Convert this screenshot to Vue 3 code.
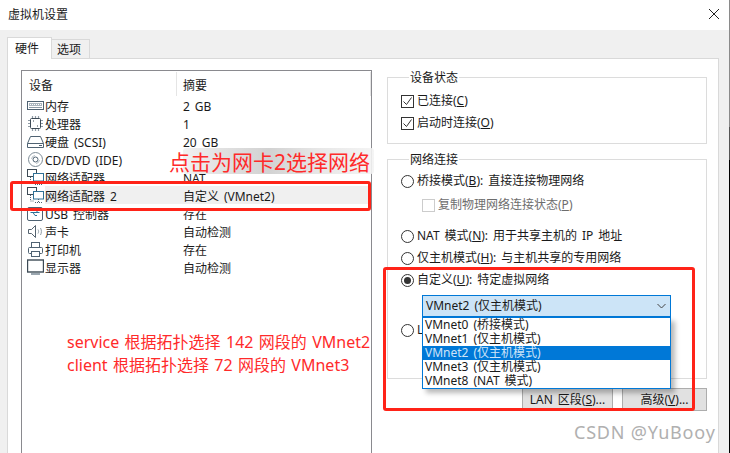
<script setup>
const rows = [
  { icon: 'mem', name: '内存', val: '2 GB' },
  { icon: 'cpu', name: '处理器', val: '1' },
  { icon: 'hdd', name: '硬盘 (SCSI)', val: '20 GB' },
  { icon: 'cd', name: 'CD/DVD (IDE)', val: '' },
  { icon: 'net', name: '网络适配器', val: 'NAT' },
  { icon: 'net', name: '网络适配器 2', val: '自定义 (VMnet2)', sel: true },
  { icon: 'usb', name: 'USB 控制器', val: '存在' },
  { icon: 'snd', name: '声卡', val: '自动检测' },
  { icon: 'prn', name: '打印机', val: '存在' },
  { icon: 'mon', name: '显示器', val: '自动检测' }
]
const nets = [
  { t: 'VMnet0 (桥接模式)' },
  { t: 'VMnet1 (仅主机模式)' },
  { t: 'VMnet2 (仅主机模式)', sel: true },
  { t: 'VMnet3 (仅主机模式)' },
  { t: 'VMnet8 (NAT 模式)' }
]
</script>

<template>
  <div class="win">
    <header class="title">
      <span>虚拟机设置</span>
      <svg class="close" width="12" height="12" viewBox="0 0 12 12"><path d="M1 1l10 10M11 1L1 11" stroke="#222" fill="none" /></svg>
    </header>
    <div class="body">
      <div class="tabs">
        <div class="tab on">硬件</div>
        <div class="tab">选项</div>
      </div>
      <div class="panel">
        <section class="list">
          <div class="lhead">
            <div class="c1">设备</div>
            <div class="c2">摘要</div>
          </div>
          <div v-for="r in rows" :key="r.name" class="row">
            <svg class="ico" width="17" height="17" viewBox="0 0 17 17" fill="none" stroke="#4f6272">
              <template v-if="r.icon === 'mem'"><rect x="0.5" y="4.500" width="16" height="8" /><rect x="2" y="6" width="13" height="3" fill="#a9b4bd" stroke="none" /><path d="M3 7.500h11" stroke="#fff" stroke-dasharray="1 1" /><path d="M2 10.500h13" stroke="#8b99a5" /></template>
              <template v-else-if="r.icon === 'cpu'"><rect x="3.500" y="3.500" width="10" height="10" rx="1" stroke="#3d4a55" /><path d="M5.500 1v2M8.500 1v2M11.500 1v2M5.500 14v2M8.500 14v2M11.500 14v2M1 5.500h2M1 8.500h2M1 11.500h2M14 5.500h2M14 8.500h2M14 11.500h2" stroke="#8f9ba5" stroke-width="1.200" /><path d="M6 6h1M10 11h1" stroke="#3d4a55" /></template>
              <template v-else-if="r.icon === 'hdd'"><path d="M0.500 10.500L3.500 3.500h10l3 7v4h-16zM0.500 10.500h16" /><path d="M12 12.500h3" /></template>
              <template v-else-if="r.icon === 'cd'"><circle cx="8.500" cy="8.500" r="7" stroke="#7d8b96" /><circle cx="8.500" cy="8.500" r="2.500" stroke="#4f6272" /><path d="M4.500 8a4 4 0 0 1 3.500-3.500M12.500 9a4 4 0 0 1-3.500 3.500" stroke="#b5bec5" /></template>
              <template v-else-if="r.icon === 'net'"><rect x="0.500" y="0.500" width="9" height="7" stroke="#3d4a55" /><rect x="6.500" y="4.500" width="10" height="7.500" fill="#fff" stroke="#2f7196" /><path d="M11.500 12v3M3.500 8v6h3M8 15.500h7" stroke="#4f6272" stroke-dasharray="1 1" /></template>
              <template v-else-if="r.icon === 'usb'"><rect x="0.500" y="2.500" width="15" height="13" rx="1.500" /><path d="M3.500 7.500h9M9 5.500l2 2M6 7.500l2 3h2" stroke="#2f7196" /></template>
              <template v-else-if="r.icon === 'snd'"><path d="M1.500 6.500h3l4-4v12l-4-4h-3z" stroke="#55636f" /><path d="M11 6.500c.8 1.300.8 2.700 0 4M13.500 5c1.200 2.300 1.200 4.700 0 7" stroke="#8f9ba5" /></template>
              <template v-else-if="r.icon === 'prn'"><rect x="4.500" y="1.500" width="8" height="5" /><rect x="1.500" y="6.500" width="14" height="6" rx="1" /><rect x="4.500" y="10.500" width="8" height="5" fill="#fff" /></template>
              <template v-else><rect x="0.500" y="1" width="16" height="12" stroke-width="1.400" stroke="#3d4a55" /><path d="M4 15h9" stroke-width="2" stroke="#9aa6af" /></template>
            </svg>
            <div class="nm" :class="{ sel: r.sel }">{{ r.name }}</div>
            <div class="vl" :class="{ sel: r.sel }">{{ r.val }}</div>
          </div>
        </section>
        <section class="side">
          <fieldset class="fs first">
            <legend>设备状态</legend>
            <label class="opt"><span class="box"><svg width="11" height="11" viewBox="0 0 11 11"><path d="M1.500 5.500l3 3 5-7" fill="none" stroke="#333" /></svg></span>已连接(<u>C</u>)</label>
            <label class="opt"><span class="box"><svg width="11" height="11" viewBox="0 0 11 11"><path d="M1.500 5.500l3 3 5-7" fill="none" stroke="#333" /></svg></span>启动时连接(<u>O</u>)</label>
          </fieldset>
          <fieldset class="fs second">
            <legend>网络连接</legend>
            <label class="opt r1"><span class="radio"></span>桥接模式(<u>B</u>): 直接连接物理网络</label>
            <label class="opt off"><span class="box dis"></span>复制物理网络连接状态(<u>P</u>)</label>
            <label class="opt r2"><span class="radio"></span>NAT 模式(<u>N</u>): 用于共享主机的 IP 地址</label>
            <label class="opt r3"><span class="radio"></span>仅主机模式(<u>H</u>): 与主机共享的专用网络</label>
            <label class="opt r3"><span class="radio dot"></span>自定义(<u>U</u>): 特定虚拟网络</label>
            <div class="combo">
              <span>VMnet2 (仅主机模式)</span>
              <svg width="9" height="6" viewBox="0 0 9 6"><path d="M.5 1l4 4 4-4" fill="none" stroke="#444" /></svg>
              <ul class="drop">
                <li v-for="n in nets" :key="n.t" :class="{ sel: n.sel }">{{ n.t }}</li>
              </ul>
            </div>
            <label class="opt r4"><span class="radio"></span>L</label>
          </fieldset>
          <div class="btns">
            <button class="btn b1">LAN 区段(<u>S</u>)...</button>
            <button class="btn b2">高级(<u>V</u>)...</button>
          </div>
        </section>
      </div>
    </div>
    <div class="edge"></div>
    <div class="mark rect1"></div>
    <div class="mark rect2"></div>
    <div class="smudge"></div>
    <div class="note big">点击为网卡2选择网络</div>
    <div class="note small"><div>service 根据拓扑选择 142 网段的 VMnet2</div><div>client 根据拓扑选择 72 网段的 VMnet3</div></div>
    <div class="wm">CSDN @YuBooy</div>
  </div>
</template>

<style scoped>
.win { position: relative; width: 730px; height: 453px; overflow: hidden; background: #f0f0f0; color: #1a1a1a; font: 12px/16px "Noto Sans", "Noto Sans CJK SC", sans-serif; word-spacing: 1.8px; }
.title { height: 30px; background: #fff; display: flex; align-items: center; justify-content: space-between; padding: 0 10px 0 8px; }
.close { margin-bottom: 2px; }
.body { padding: 7px 11px 0 7px; }
.tabs { display: flex; align-items: flex-end; height: 21px; }
.tab { height: 19px; width: 38px; box-sizing: border-box; padding-left: 5px; background: #f0f0f0; border: 1px solid #d9d9d9; border-left: 0; border-bottom: 0; line-height: 20px; }
.tab.on { height: 22px; width: 45px; padding-left: 7px; background: #fff; border-left: 1px solid #d9d9d9; position: relative; z-index: 1; margin-bottom: -1px; line-height: 21px; }
.panel { height: 395px; box-sizing: border-box; background: #fff; border: 1px solid #d9d9d9; border-bottom: 0; display: flex; padding: 11px 11px 0 13px; }
.list { width: 351px; height: 400px; box-sizing: border-box; border: 1px solid #8a8a8f; border-bottom: 0; flex: none; }
.lhead { display: flex; height: 25px; align-items: center; }
.c1 { width: 155px; height: 24px; padding-left: 7px; box-sizing: border-box; border-right: 1px solid #e5e5e5; line-height: 27px; }
.c2 { padding-left: 6px; flex: 1; height: 24px; line-height: 27px; border-right: 1px solid #e5e5e5; }
.row { display: flex; height: 18px; align-items: center; padding-left: 5px; }
.ico { flex: none; margin-right: 1px; }
.nm { width: 138px; height: 18px; box-sizing: border-box; padding-top: 3px; line-height: 16px; }
.vl { flex: 1; height: 18px; box-sizing: border-box; padding-top: 3px; line-height: 16px; }
.sel { background: #f0f0f0; }
.side { width: 320px; margin-left: 15px; flex: none; }
.fs { margin: 0; padding: 0; border: 1px solid #dcdcdc; box-sizing: border-box; min-width: 0; }
.fs legend { margin-left: 8px; padding: 0 1px; line-height: 15px; height: 14px; }
.first { height: 74px; padding: 8px 0 0 13px; }
.second { height: 227px; margin-top: 8px; padding: 6px 0 0 13px; position: relative; }
.opt { display: flex; align-items: center; height: 18px; white-space: pre; margin-bottom: 4px; }
.opt u { text-decoration: underline; text-underline-offset: 1px; }
.box { width: 13px; height: 13px; box-sizing: border-box; border: 1px solid #333; margin-right: 3px; display: flex; align-items: center; justify-content: center; flex: none; background: #fff; }
.box.dis { border-color: #ccc; }
.radio { width: 13px; height: 13px; box-sizing: border-box; border: 1px solid #333; border-radius: 50%; margin-right: 3px; flex: none; display: flex; align-items: center; justify-content: center; background: #fff; }
.radio.dot::after { content: ""; width: 7px; height: 7px; border-radius: 50%; background: #333; }
.off { color: #6d6d6d; margin: 6px 0 0 21px; }
.r2 { margin-top: 13px; }
.r3 { margin-top: 0; }
.combo { position: relative; margin: 6px 0 0 21px; width: 249px; height: 22px; box-sizing: border-box; background: #cce4f7; border: 1px solid #0078d7; display: flex; align-items: center; justify-content: space-between; padding: 0 4px 0 3px; }
.drop { position: absolute; left: -1px; top: 21px; width: 249px; height: 72px; box-sizing: border-box; margin: 0; padding: 0; list-style: none; background: #fff; border: 1px solid #0078d7; box-shadow: 4px 4px 5px rgba(0, 0, 0, 0.28); z-index: 3; }
.drop li { height: 14px; line-height: 14px; padding-left: 2px; white-space: pre; }
.drop li.sel { background: #0078d7; color: #cfe4f7; }
.r4 { margin-top: 4px; }
.btns { display: flex; justify-content: flex-end; gap: 9px; margin-top: 9px; }
.btn { height: 23px; width: 91px; box-sizing: border-box; border: 1px solid #adadad; background: #e1e1e1; font: inherit; word-spacing: inherit; color: #1a1a1a; padding: 0; }
.b2 { width: 85px; }
.edge { position: absolute; right: 0; top: 0; width: 1px; height: 453px; background: linear-gradient(#8a8a8a 0 127px, #555 127px 160px, #000 160px); z-index: 6; }
.mark { position: absolute; box-sizing: border-box; border: 3px solid #ff2318; border-radius: 3px; z-index: 4; }
.rect1 { left: 10px; top: 181px; width: 361px; height: 30px; }
.rect2 { left: 383px; top: 267px; width: 312px; height: 144px; }
.smudge { position: absolute; left: 183px; top: 148px; width: 191px; height: 26px; background: linear-gradient(90deg, rgba(240,240,240,.9), rgba(222,222,222,.9) 20%, rgba(205,205,205,.9) 45%, rgba(228,228,228,.9) 70%, rgba(243,243,243,.9)); border-radius: 3px; z-index: 3; }
.note { position: absolute; color: #ff2a2a; z-index: 5; white-space: pre; word-spacing: 1.2px; }
.big { left: 169px; top: 148px; font-size: 21px; line-height: 28px; }
.small { left: 67px; top: 331px; font-size: 16px; line-height: 23px; }
.wm { position: absolute; left: 574px; top: 420px; font-size: 18px; line-height: 24px; color: #b0b0b0; z-index: 5; letter-spacing: 0.8px; word-spacing: 0; }
</style>
